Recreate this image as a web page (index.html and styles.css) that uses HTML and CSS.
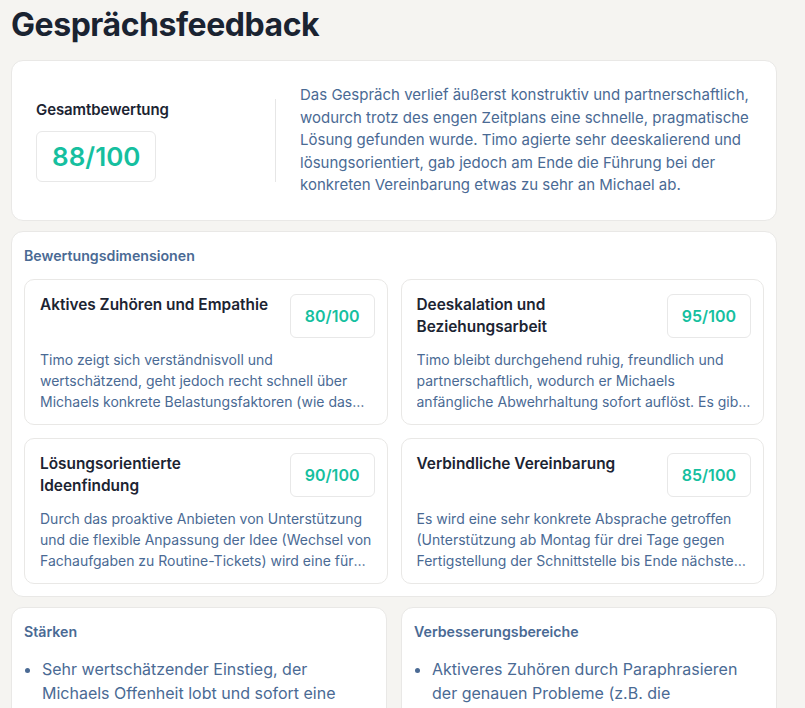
FILE: index.html
```html
<!DOCTYPE html>
<html lang="de">
<head>
  <meta charset="UTF-8">
  <meta name="viewport" content="width=device-width, initial-scale=1">
  <title>Gesprächsfeedback</title>
  <link rel="stylesheet" href="styles.css">
</head>
<body>
  <div class="page">
    <h1 class="page-title">Gesprächsfeedback</h1>

    <section class="card overview">
      <div class="overall">
        <div class="overall-label">Gesamtbewertung</div>
        <div class="score score-large">88/100</div>
      </div>
      <p class="overview-text">Das Gespräch verlief äußerst konstruktiv und partnerschaftlich, wodurch trotz des engen Zeitplans eine schnelle, pragmatische Lösung gefunden wurde. Timo agierte sehr deeskalierend und lösungsorientiert, gab jedoch am Ende die Führung bei der konkreten Vereinbarung etwas zu sehr an Michael ab.</p>
    </section>

    <section class="card section">
      <h3 class="section-title">Bewertungsdimensionen</h3>
      <div class="dimensions">
        <div class="dimension">
          <div class="dimension-head">
            <h4>Aktives Zuhören und Empathie</h4>
            <div class="score">80/100</div>
          </div>
          <p class="dimension-text">Timo zeigt sich verständnisvoll und wertschätzend, geht jedoch recht schnell über Michaels konkrete Belastungsfaktoren (wie das Onboarding und die Projektdeadlines) hinweg.</p>
        </div>
        <div class="dimension">
          <div class="dimension-head">
            <h4>Deeskalation und Beziehungsarbeit</h4>
            <div class="score">95/100</div>
          </div>
          <p class="dimension-text">Timo bleibt durchgehend ruhig, freundlich und partnerschaftlich, wodurch er Michaels anfängliche Abwehrhaltung sofort auflöst. Es gibt keinerlei Anzeichen von Druck oder Vorwürfen.</p>
        </div>
        <div class="dimension">
          <div class="dimension-head">
            <h4>Lösungsorientierte Ideenfindung</h4>
            <div class="score">90/100</div>
          </div>
          <p class="dimension-text">Durch das proaktive Anbieten von Unterstützung und die flexible Anpassung der Idee (Wechsel von Fachaufgaben zu Routine-Tickets) wird eine für beide Seiten tragfähige Lösung gefunden.</p>
        </div>
        <div class="dimension">
          <div class="dimension-head">
            <h4>Verbindliche Vereinbarung</h4>
            <div class="score">85/100</div>
          </div>
          <p class="dimension-text">Es wird eine sehr konkrete Absprache getroffen (Unterstützung ab Montag für drei Tage gegen Fertigstellung der Schnittstelle bis Ende nächster Woche), die Michael jedoch selbst formuliert.</p>
        </div>
      </div>
    </section>

    <div class="columns">
      <section class="card section">
        <h3 class="section-title">Stärken</h3>
        <ul class="points">
          <li>Sehr wertschätzender Einstieg, der Michaels Offenheit lobt und sofort eine positive Gesprächsbasis schafft.</li>
          <li>Flexible Anpassung des Vorschlags an Michaels Einwände.</li>
        </ul>
      </section>
      <section class="card section">
        <h3 class="section-title">Verbesserungsbereiche</h3>
        <ul class="points">
          <li>Aktiveres Zuhören durch Paraphrasieren der genauen Probleme (z.B. die Überlastung durch das Onboarding).</li>
          <li>Die Vereinbarung selbst zusammenfassen und festhalten.</li>
        </ul>
      </section>
    </div>
  </div>
</body>
</html>
```

FILE: styles.css
```css
* {
  box-sizing: border-box;
}

body {
  margin: 0;
  background-color: #f5f4f1;
  font-family: Inter, "Liberation Sans", Arial, sans-serif;
  color: #1c2432;
}

.page {
  max-width: 788px;
  padding: 0 11px;
}

.page-title {
  margin: 5px 0 15px 0;
  font-size: 32px;
  line-height: 40px;
  font-weight: 700;
  letter-spacing: -0.45px;
  color: #1a2331;
}

.card {
  background-color: #ffffff;
  border: 1px solid #e9e8e6;
  border-radius: 12px;
  margin-bottom: 10px;
}

/* top summary card */
.overview {
  display: flex;
  align-items: center;
  padding: 23px 24px;
}

.overall {
  flex: 0 0 240px;
  border-right: 1px solid #e6e6e6;
  margin-right: 24px;
}

.overall-label {
  font-size: 15px;
  line-height: 22px;
  font-weight: 600;
  letter-spacing: -0.1px;
  margin-bottom: 10px;
}

.overview-text {
  flex: 1;
  margin: 0;
  font-size: 15px;
  line-height: 22.5px;
  color: #4a6a94;
}

.score {
  display: inline-block;
  border: 1px solid #e8e8e8;
  border-radius: 6px;
  padding: 10px 14px;
  font-size: 16px;
  line-height: 22px;
  font-weight: 600;
  color: #16bf9f;
  white-space: nowrap;
}

.score-large {
  padding: 8px 15px;
  font-size: 26px;
  line-height: 33px;
}

/* sections */
.section {
  padding: 14px 12px 12px;
}

.section-title {
  margin: 0 0 13px 0;
  font-size: 14.2px;
  line-height: 20px;
  font-weight: 600;
  color: #4a6a94;
}

.dimensions {
  display: grid;
  grid-template-columns: 1fr 1fr;
  gap: 13px;
}

.dimension {
  border: 1px solid #e9e8e6;
  border-radius: 10px;
  padding: 14px 12px 12px 15px;
}

.dimension-head {
  display: flex;
  justify-content: space-between;
  align-items: flex-start;
  gap: 12px;
}

.dimension-head h4 {
  margin: 0;
  font-size: 15.4px;
  line-height: 22px;
  font-weight: 600;
  color: #1c2432;
}

.dimension-text {
  margin: 11px 0 0 0;
  font-size: 14px;
  line-height: 21px;
  color: #4a6a94;
  display: -webkit-box;
  -webkit-line-clamp: 3;
  -webkit-box-orient: vertical;
  overflow: hidden;
}

/* strengths / improvements */
.columns {
  display: grid;
  grid-template-columns: 1fr 1fr;
  gap: 14px;
}

.points {
  margin: 15px 0 0 0;
  padding-left: 18px;
  font-size: 16px;
  line-height: 24px;
  color: #4a6a94;
}
```
